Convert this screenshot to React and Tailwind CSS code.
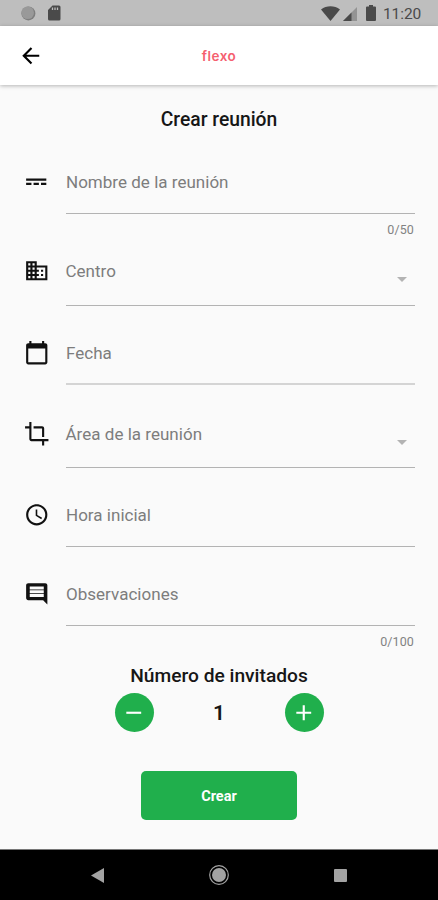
const ICONS = {
  dash: 'M2 9v2h19V9H2zm0 6h5v-2H2v2zm7 0h5v-2H9v2zm7 0h5v-2h-5v2z',
  building:
    'M12 7V3H2v18h20V7H12zM6 19H4v-2h2v2zm0-4H4v-2h2v2zm0-4H4V9h2v2zm0-4H4V5h2v2zm4 12H8v-2h2v2zm0-4H8v-2h2v2zm0-4H8V9h2v2zm0-4H8V5h2v2zm10 12h-8v-2h2v-2h-2v-2h2v-2h-2V9h8v10zm-2-8h-2v2h2v-2zm0 4h-2v2h2v-2z',
  calendar:
    'M20 3h-1V1h-2v2H7V1H5v2H4c-1.1 0-2 .9-2 2v16c0 1.1.9 2 2 2h16c1.1 0 2-.9 2-2V5c0-1.1-.9-2-2-2zm0 18H4V8h16v13z',
  crop: 'M17 15h2V7c0-1.1-.9-2-2-2H9v2h8v8zM7 17V1H5v4H1v2h4v10c0 1.1.9 2 2 2h10v4h2v-4h4v-2H7z',
  clock:
    'M11.99 2C6.47 2 2 6.48 2 12s4.47 10 9.99 10C17.52 22 22 17.52 22 12S17.52 2 11.99 2zM12 20c-4.42 0-8-3.58-8-8s3.58-8 8-8 8 3.58 8 8-3.58 8-8 8zm.5-13H11v6l5.25 3.15.75-1.23-4.5-2.67z',
  comment:
    'M21.99 4c0-1.1-.89-2-1.99-2H4c-1.1 0-2 .9-2 2v12c0 1.1.9 2 2 2h14l4 4-.01-18zM18.6 15H5.4v-2.8h13.2V15zm0-3.5H5.4V8.7h13.2v2.8zm0-3.5H5.4V5.2h13.2V8z',
  back: 'M20 11H7.83l5.59-5.59L12 4l-8 8 8 8 1.41-1.41L7.83 13H20v-2z',
  minus: 'M19 13H5v-2h14v2z',
  plus: 'M19 13h-6v6h-2v-6H5v-2h6V5h2v6h6v2z',
};

function Icon({ name, className }) {
  return (
    <svg viewBox="0 0 24 24" className={className} fill="currentColor">
      <path d={ICONS[name]} />
    </svg>
  );
}

// Each field carries the space above it and the height down to its underline.
const FIELDS = [
  { icon: 'dash', label: 'Nombre de la reunión', space: 'mt-[36px] h-[45px]', counter: '0/50' },
  { icon: 'building', label: 'Centro', space: 'mt-[20px] h-[48px]', select: true },
  { icon: 'calendar', label: 'Fecha', space: 'mt-[34px] h-[45px]', thick: true },
  { icon: 'crop', label: 'Área de la reunión', space: 'mt-[36px] h-[47px]', select: true },
  { icon: 'clock', label: 'Hora inicial', space: 'mt-[34px] h-[45px]' },
  { icon: 'comment', label: 'Observaciones', space: 'mt-[34px] h-[45px]', counter: '0/100' },
];

function Field({ icon, label, space, select, thick, counter }) {
  return (
    <>
      <div className={`flex pl-6 pr-[23px] ${space}`}>
        <Icon name={icon} className="mr-4 size-[25.5px] shrink-0 text-[#111]" />
        <div
          className={`flex flex-1 items-start justify-between ${select ? '' : 'ml-[0.5px]'} ${
            thick ? 'border-b-2 border-b-[#d4d4d4]' : 'border-b border-b-[#b3b3b3]'
          }`}
        >
          <span className="text-[17px] leading-[26px] tracking-[0.02px] text-[#7d7d7d]">{label}</span>
          {select && (
            <svg viewBox="0 0 10 5" className="mr-2 mt-[19px] h-[5px] w-[10px]" fill="#b3b3b3">
              <path d="M0 0h10L5 5z" />
            </svg>
          )}
        </div>
      </div>
      {counter && (
        <div className="mt-2 h-4 pr-6 text-right text-[12.5px] leading-4 tracking-[0.1px] text-[#828282]">{counter}</div>
      )}
    </>
  );
}

function StatusBar() {
  return (
    <div className="flex h-[26px] items-center bg-[#bebebe] text-[#4a4a4a]">
      <svg viewBox="0 0 16 16" className="ml-5 size-4">
        <circle cx="8.4" cy="8.4" r="7" fill="#7e7e7e" />
        <circle cx="7.7" cy="7.7" r="6.3" fill="#999" />
      </svg>
      <svg viewBox="0 0 13 16" className="ml-3 h-4 w-[13px]" fill="currentColor">
        <path d="M4.5.5H11a1.5 1.5 0 0 1 1.5 1.5v12a1.5 1.5 0 0 1-1.5 1.5H1.5A1.5 1.5 0 0 1 0 14V5z" />
        <path d="M4.5 2.5v2.5M7 2.5v2.5M9.5 2.5v2.5" stroke="#bebebe" strokeWidth="1.3" />
      </svg>
      <div className="flex-1" />
      <svg viewBox="0 0 19 15" className="h-[15px] w-[19px]" fill="currentColor">
        <path d="M0 3.5C5.5-.7 13.5-.7 19 3.5L9.5 15z" />
      </svg>
      <svg viewBox="0 0 14 14" className="ml-[3px] mt-[2px] size-[14px]">
        <path d="M14 0v14H0z" fill="#939393" />
        <path d="M8.5 5.5V14H0z" fill="#4a4a4a" />
      </svg>
      <svg viewBox="0 0 10 16" className="ml-[9px] h-4 w-[10px]" fill="currentColor">
        <path d="M3 0h4v1.6h2a1 1 0 0 1 1 1V15a1 1 0 0 1-1 1H1a1 1 0 0 1-1-1V2.6a1 1 0 0 1 1-1h2z" />
      </svg>
      <span className="ml-[7px] mr-[17px] mt-[2px] w-[38px] whitespace-nowrap text-[15.5px] leading-5 tracking-[-0.1px]">11:20</span>
    </div>
  );
}

function RoundButton({ icon }) {
  return (
    <button className="flex size-[39px] items-center justify-center rounded-full bg-[#20af4c] text-white">
      <Icon name={icon} className="size-[25.5px]" />
    </button>
  );
}

export default function App() {
  return (
    <div className="flex h-[900px] w-[438px] flex-col overflow-hidden bg-[#fafafa] font-[Roboto,sans-serif] text-[#161616]">
      <StatusBar />
      <header className="grid h-[59px] shrink-0 grid-cols-[1fr_auto_1fr] items-center bg-white shadow-[0_1px_4px_rgba(0,0,0,0.28)]">
        <Icon name="back" className="ml-[18px] size-[25.5px] text-black" />
        <span className="mt-px font-[Inter,sans-serif] text-[13.5px] font-semibold leading-5 tracking-[0.5px] text-[#f55f70]">flexo</span>
      </header>
      <main className="flex flex-1 flex-col">
        <h1 className="mt-[22px] text-center text-[19.3px] font-medium leading-[26px]">Crear reunión</h1>
        {FIELDS.map((field) => (
          <Field key={field.icon} {...field} />
        ))}
        <h2 className="mt-[13px] text-center text-[19.2px] font-medium leading-[26px]">Número de invitados</h2>
        <div className="mx-auto mt-[4px] flex w-[209px] items-center justify-between">
          <RoundButton icon="minus" />
          <span className="text-[21px] font-semibold leading-6">1</span>
          <RoundButton icon="plus" />
        </div>
        <button className="mx-auto mt-[39px] h-[49px] w-[156px] rounded-[5px] bg-[#20af4c] pt-[2px] text-[14.5px] font-bold text-white">
          Crear
        </button>
      </main>
      <nav className="flex h-[51px] shrink-0 items-center border-t border-[#777] bg-black">
        <svg viewBox="0 0 13 15" className="ml-[91px] h-[15px] w-[13px]" fill="#a3a3a3">
          <path d="M13 0v15L0 7.5z" />
        </svg>
        <svg viewBox="0 0 20 20" className="ml-[105px] size-5">
          <circle cx="10" cy="10" r="9.3" fill="none" stroke="#a3a3a3" strokeWidth="1.2" />
          <circle cx="10" cy="10" r="7" fill="#a3a3a3" />
        </svg>
        <div className="ml-[105px] size-[13px] rounded-[1px] bg-[#a3a3a3]" />
      </nav>
    </div>
  );
}
